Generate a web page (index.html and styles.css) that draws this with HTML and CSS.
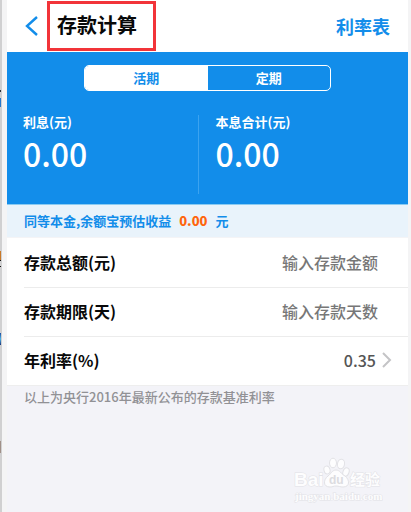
FILE: index.html
```html
<!DOCTYPE html>
<html lang="zh-CN">
<head>
<meta charset="utf-8">
<meta name="viewport" content="width=device-width, initial-scale=1">
<title>存款计算</title>
<link rel="stylesheet" href="styles.css">
</head>
<body>
<div class="edge"></div>
<main class="app">
  <header class="topbar">
    <button class="back" type="button" aria-label="返回">
      <svg width="14" height="20" viewBox="0 0 14 20"><path d="M12 1 2 10l10 9" fill="none" stroke="#128dea" stroke-width="2.4"/></svg>
    </button>
    <h1 class="title">存款计算</h1>
    <a class="rates" href="#rates">利率表</a>
  </header>

  <section class="summary">
    <div class="tabs">
      <button class="tab tab-active" type="button">活期</button>
      <button class="tab" type="button">定期</button>
    </div>
    <div class="totals">
      <div class="total">
        <span class="total-name">利息(元)</span>
        <span class="total-value">0.00</span>
      </div>
      <div class="total">
        <span class="total-name">本息合计(元)</span>
        <span class="total-value">0.00</span>
      </div>
    </div>
  </section>

  <p class="estimate">同等本金,余额宝预估收益 <strong class="amount">0.00</strong> 元</p>

  <form class="fields">
    <div class="row">
      <label for="amount">存款总额(元)</label>
      <input id="amount" type="text" placeholder="输入存款金额">
    </div>
    <div class="row">
      <label for="days">存款期限(天)</label>
      <input id="days" type="text" placeholder="输入存款天数">
    </div>
    <div class="row">
      <label for="rate">年利率(%)</label>
      <button class="rate" id="rate" type="button">0.35
        <svg width="10" height="16" viewBox="0 0 10 16"><path d="m1 1 7 7-7 7" fill="none" stroke="#c4c4c6" stroke-width="2"/></svg>
      </button>
    </div>
  </form>
  <p class="note">以上为央行2016年最新公布的存款基准利率</p>

  <footer class="brand">
    <svg width="90" height="48" viewBox="0 0 90 48" role="img" aria-label="Baidu 经验">
      <g fill="#fdfdfe" stroke="#e2e2e6" stroke-width="1">
        <ellipse cx="34" cy="14" rx="3" ry="4" transform="rotate(-15 34 14)"/>
        <ellipse cx="40" cy="7" rx="3.500" ry="4.800"/>
        <ellipse cx="48" cy="8" rx="3.500" ry="4.800" transform="rotate(10 48 8)"/>
        <ellipse cx="53" cy="16" rx="3" ry="4.300" transform="rotate(20 53 16)"/>
        <path d="M43 14c-4 0-5 4-8 6-5 4-5 11 2 11 3 0 3-1 6-1s4 1 7 1c7 0 7-7 2-11-4-2-5-6-9-6z"/>
      </g>
      <g class="brand-text">
        <text x="1" y="30" font-size="19">Bai</text>
        <text class="brand-du" x="36" y="28" font-size="12">du</text>
        <text class="brand-cjk" x="57" y="29" font-size="15">经验</text>
        <text class="brand-url" x="2" y="44" font-size="11">jingyan.baidu.com</text>
      </g>
    </svg>
  </footer>
</main>
</body>
</html>
```

FILE: styles.css
```css
* {
  box-sizing: border-box;
}

body {
  display: flex;
  min-height: 100vh;
  margin: 0;
  background: #f4f4f5;
  color: #080808;
  font-family: "Noto Sans CJK SC", sans-serif;
  font-size: 16px;
}

h1,
p {
  margin: 0;
}

button,
input {
  padding: 0;
  border: 0;
  background: none;
  color: inherit;
  font: inherit;
}

/* Sliver of the page that lies behind the window */
.edge {
  flex: none;
  width: 2px;
  background:
    linear-gradient(#2b3038, #2b3038) 0 90px / 1px 2px no-repeat,
    linear-gradient(#2878cc, #2878cc) 0 98px / 1px 9px no-repeat,
    linear-gradient(#c87828, #c87828) 0 251px / 1px 9px no-repeat,
    linear-gradient(#111, #111) 0 260px / 1px 1px no-repeat,
    linear-gradient(#111, #111) 0 266px / 1px 1px no-repeat,
    linear-gradient(#1848a0, #50b8e8, #183078) 0 333px / 1px 12px no-repeat,
    linear-gradient(#a09088, #a09088) 0 441px / 1px 12px no-repeat,
    #d0d0d1;
}

.app {
  display: flex;
  flex: 1;
  flex-direction: column;
  margin: 0 3px 0 5px;
  background: #f3f3f8;
}

.topbar {
  display: flex;
  align-items: center;
  height: 52px;
  padding: 0 18px;
  background: #fff;
}

.back {
  display: flex;
  width: 22px;
}

.title {
  height: 50px;
  padding: 0 16px 0 7px;
  border: 3px solid #f23439;
  font-size: 20px;
  font-weight: 700;
  line-height: 42px;
}

.rates {
  margin-left: auto;
  color: #128dea;
  font-size: 18px;
  font-weight: 700;
  line-height: 24px;
  text-decoration: none;
}

.summary {
  padding: 13px 0 10px;
  border-bottom: 1px solid #8acbf2;
  background: #128dea;
  color: #fff;
}

.tabs {
  display: flex;
  height: 26px;
  margin: 0 77px;
  overflow: hidden;
  border: 1px solid #fff;
  border-radius: 5px;
}

.tab {
  flex: 1;
  font-size: 13px;
  font-weight: 700;
  line-height: 24px;
}

.tab-active {
  background: #fff;
  color: #128dea;
}

.totals {
  display: flex;
  margin-top: 24px;
}

.total {
  display: flex;
  flex: 1;
  flex-direction: column;
  height: 79px;
  padding-left: 16px;
}

.total:first-child {
  flex: none;
  width: 48%;
  border-right: 1px solid #3ba3f0;
}

.total-name {
  font-size: 13px;
  font-weight: 700;
  line-height: 14px;
}

.total-value {
  font-size: 32px;
  font-weight: 500;
  line-height: 48px;
}

.estimate {
  padding: 0 17px;
  border-bottom: 1px solid #f4f4f6;
  background: #e9f3fb;
  color: #128dea;
  font-size: 13px;
  font-weight: 700;
  line-height: 32px;
}

.amount {
  margin: 0 5px;
  color: #ff650d;
}

.fields {
  border-bottom: 1px solid #eee;
  background: #fff;
}

.row {
  display: flex;
  align-items: center;
  height: 49px;
  margin-left: 17px;
  padding: 0 30px 2px 0;
  font-weight: 700;
}

.row + .row {
  border-top: 1px solid #ececec;
}

.row:last-child {
  padding-right: 16px;
}

.row input {
  flex: 1;
  min-width: 0;
  font-weight: 500;
  text-align: right;
}

.row input::placeholder {
  color: #777;
}

.rate {
  display: flex;
  gap: 6px;
  align-items: center;
  margin-left: auto;
  color: #555;
  font-weight: 500;
}

.note {
  padding: 0 17px;
  color: #919195;
  font-size: 13px;
  font-weight: 500;
  line-height: 22px;
}

.brand {
  display: flex;
  justify-content: flex-end;
  margin-top: auto;
  padding: 0 25px 8px 0;
}

.brand-text {
  fill: #fdfdfe;
  stroke: #e2e2e6;
  stroke-width: 1px;
  font-family: "Liberation Sans", sans-serif;
  font-weight: 700;
  paint-order: stroke;
}

.brand-du {
  fill: #dcdce0;
  stroke: none;
}

.brand-cjk {
  font-family: "Noto Sans CJK SC", sans-serif;
}

.brand-url {
  font-family: "Liberation Serif", serif;
}
```
